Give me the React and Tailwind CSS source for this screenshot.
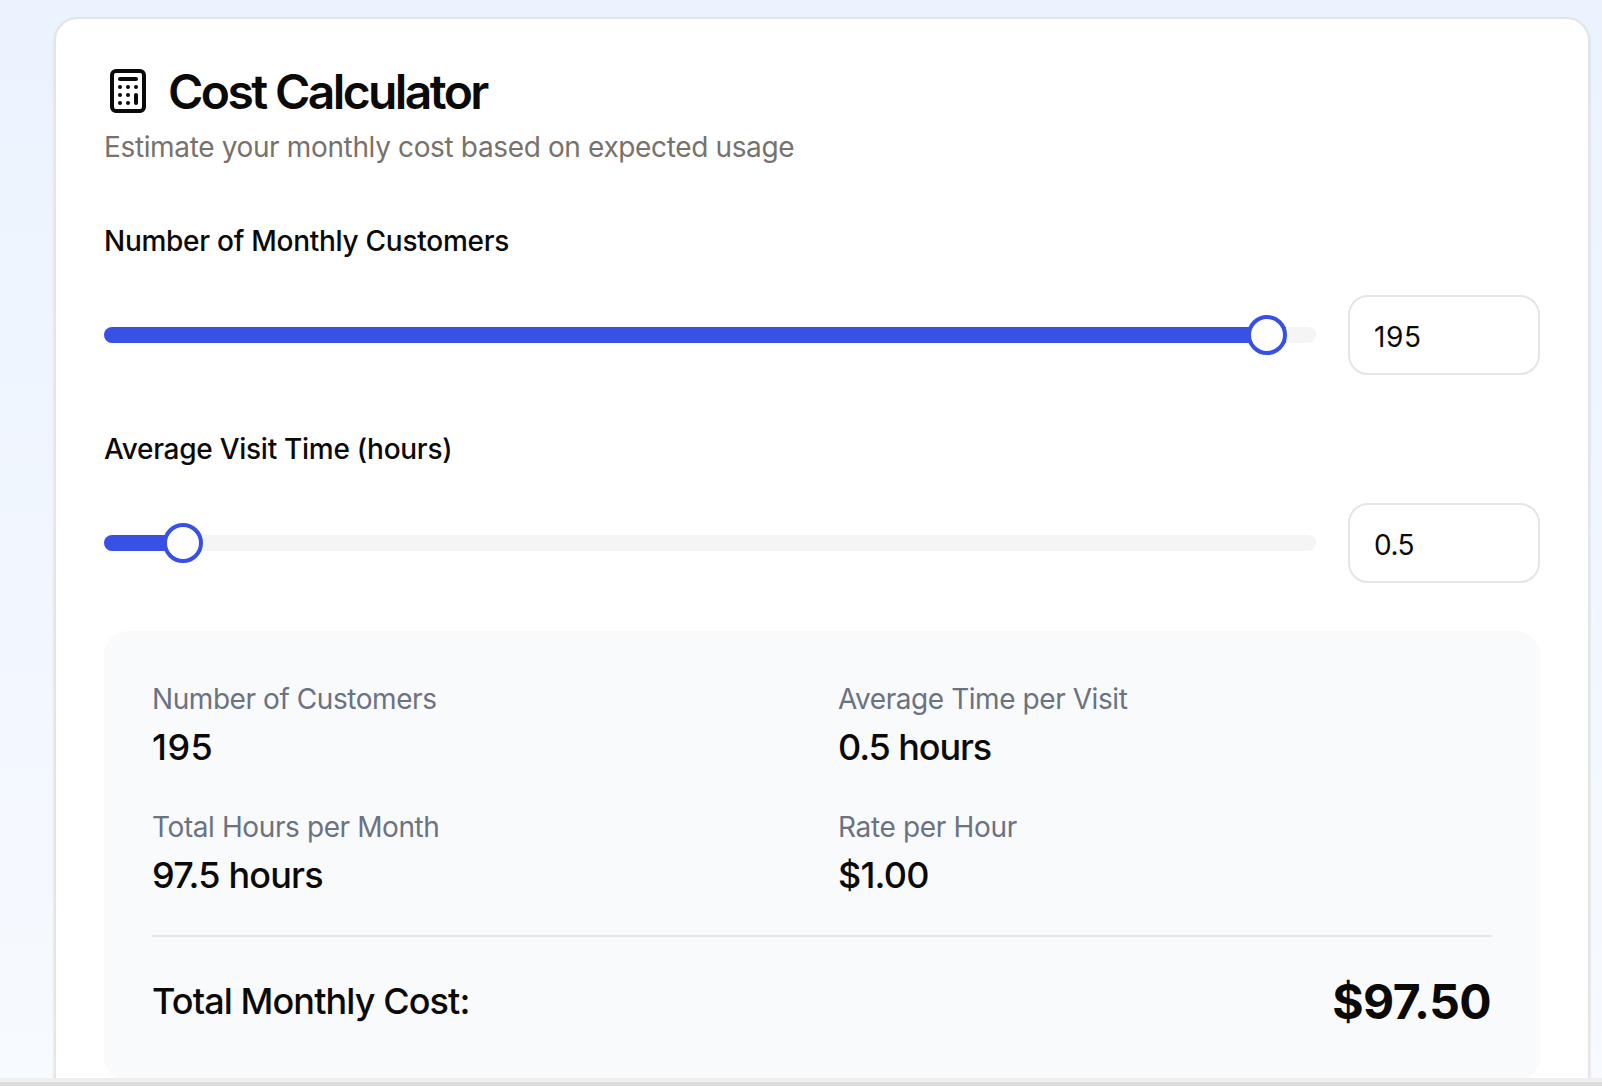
import { useState } from "react";
import { Calculator } from "lucide-react";

function SliderField({ label, value, inputClass, percent }) {
  const [text, setText] = useState(value);
  return (
    <div className="flex flex-col gap-8">
      <label className="h-12 pt-0.5 text-[28px] leading-[48px] font-medium tracking-[-0.27px] whitespace-nowrap">{label}</label>
      <div className="flex items-center gap-8">
        <div className="relative flex h-10 flex-1 items-center">
          <div className="h-4 w-full overflow-hidden rounded-full bg-[#f5f5f4]">
            <div className="h-full bg-[#3850e4]" style={{ width: `${percent}%` }} />
          </div>
          <div
            className="absolute top-0 size-10 rounded-full border-4 border-[#3850e4] bg-white"
            style={{ left: `calc(${percent}% - ${(percent * 40) / 100}px)` }}
          />
        </div>
        <input
          className={"h-20 w-48 rounded-[20px] border-2 border-[#e5e5e5] bg-white px-6 pt-[3px] text-[28px] outline-none " + inputClass}
          value={text}
          onChange={(e) => setText(e.target.value)}
        />
      </div>
    </div>
  );
}

function Stat({ label, labelClass, value, valueClass }) {
  return (
    <div>
      <p className={"pt-px text-[28px] leading-[39px] whitespace-nowrap text-[#6b7280] " + labelClass}>{label}</p>
      <p className={"pt-px text-[36px] leading-[55px] font-medium whitespace-nowrap " + valueClass}>{value}</p>
    </div>
  );
}

export default function App() {
  return (
    <div className="flex h-[1086px] w-[1602px] flex-col overflow-hidden font-['Inter',sans-serif] text-[#0c0a09]">
      <main className="h-[1078px] overflow-hidden bg-linear-to-b from-[#ebf3fe] to-[#f7faff] pt-[17px] pl-[54px]">
        <section className="h-[1200px] w-[1536px] rounded-[24px] border-2 border-[#e7e5e4] bg-white p-12 shadow-sm">
          <header className="flex flex-col gap-3">
            <div className="flex h-12 items-center gap-4">
              <Calculator className="size-12" strokeWidth={2} />
              <h1 className="pt-0.5 text-[48px] leading-[48px] font-semibold tracking-[-2.6px] whitespace-nowrap">Cost Calculator</h1>
            </div>
            <p className="pt-px text-[28px] leading-[39px] tracking-[-0.36px] whitespace-nowrap text-[#78716c]">
              Estimate your monthly cost based on expected usage
            </p>
          </header>
          <div className="mt-12 flex flex-col gap-12">
            <SliderField label="Number of Monthly Customers" value="195" inputClass="tracking-[0.6px]" percent={97.5} />
            <SliderField label="Average Visit Time (hours)" value="0.5" inputClass="tracking-[-0.5px]" percent={5.06} />
            <div className="rounded-[24px] bg-[#f9fafc] p-12">
              <div className="grid grid-cols-2 gap-8">
                <Stat label="Number of Customers" labelClass="tracking-[-0.43px]" value="195" valueClass="tracking-[0.5px]" />
                <Stat label="Average Time per Visit" labelClass="tracking-[-0.43px]" value="0.5 hours" valueClass="tracking-[-1.1px]" />
                <Stat label="Total Hours per Month" labelClass="tracking-[-0.4px]" value="97.5 hours" valueClass="tracking-[-0.8px]" />
                <Stat label="Rate per Hour" labelClass="tracking-[-0.33px]" value="$1.00" valueClass="tracking-[-0.8px]" />
              </div>
              <div className="mt-8 flex items-center justify-between border-t-2 border-[#e5e5e4] pt-8">
                <span className="pt-px text-[36px] leading-[55px] font-medium tracking-[-0.9px]">Total Monthly Cost:</span>
                <span className="pt-0.5 pr-px text-[48px] leading-[62px] font-bold tracking-[-0.6px]">$97.50</span>
              </div>
            </div>
          </div>
        </section>
      </main>
      <div className="h-2 border-t-4 border-[#eeeeee] bg-[#dcdcdc]" />
    </div>
  );
}
